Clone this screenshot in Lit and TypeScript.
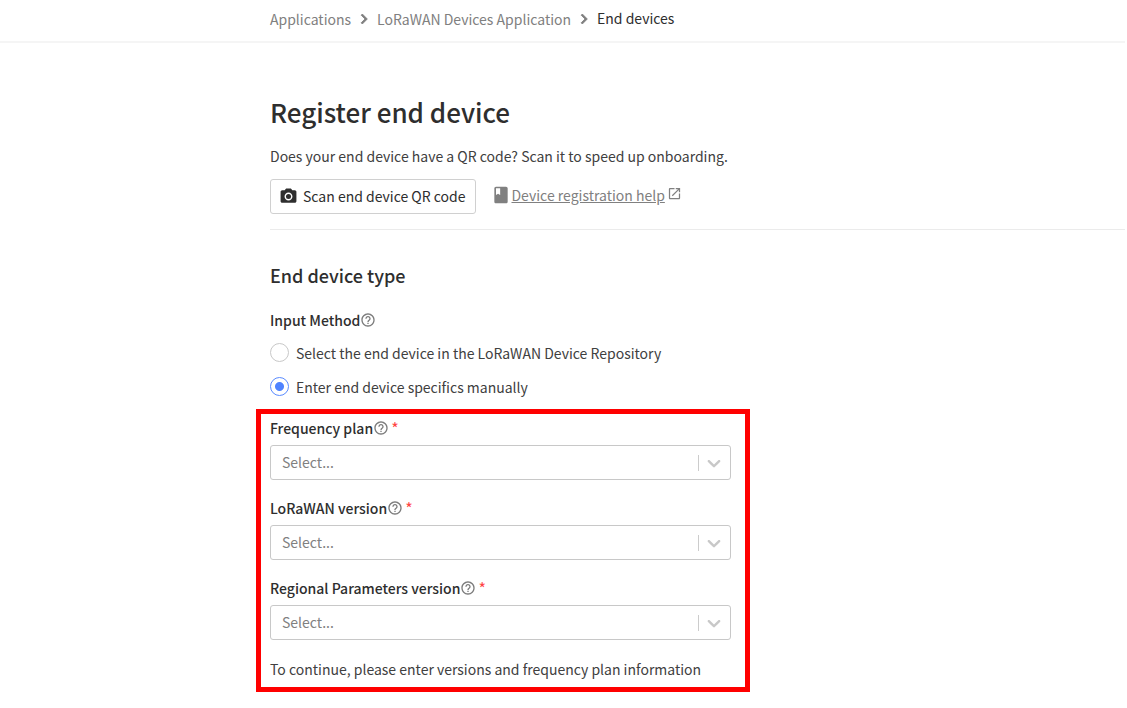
import { LitElement, html, css, svg } from "lit";
import { customElement, property, state } from "lit/decorators.js";

const helpIcon = svg`<path fill="currentColor" d="M11 18h2v-2h-2v2zm1-16C6.48 2 2 6.48 2 12s4.48 10 10 10 10-4.48 10-10S17.52 2 12 2zm0 18c-4.41 0-8-3.59-8-8s3.59-8 8-8 8 3.59 8 8-3.59 8-8 8zm0-14c-2.21 0-4 1.79-4 4h2c0-1.1.9-2 2-2s2 .9 2 2c0 2-3 1.75-3 5h2c0-2.25 3-2.5 3-5 0-2.21-1.79-4-4-4z"/>`;

@customElement("help-hint")
class HelpHint extends LitElement {
  static styles = css`
    :host {
      display: inline-flex;
      color: #7c7c7c;
    }
    .icon {
      width: 16px;
      height: 16px;
    }
  `;
  render() {
    return html`<svg class="icon" viewBox="0 0 24 24" aria-hidden="true">${helpIcon}</svg>`;
  }
}

@customElement("select-field")
class SelectField extends LitElement {
  @property() label = "";
  @property({ attribute: false }) options: string[] = [];

  static styles = css`
    :host {
      display: block;
    }
    .label {
      display: flex;
      align-items: center;
      height: 20px;
      margin-bottom: 7px;
      font-weight: 500;
      color: #2e2e2e;
    }
    .required {
      margin-left: 2px;
      color: #f44;
      font-size: 16px;
      font-weight: 400;
    }
    .control {
      display: grid;
      grid-template-columns: 1fr 33px;
      align-items: center;
    }
    .select {
      grid-area: 1 / 1 / 2 / 3;
      width: 100%;
      height: 35px;
      box-sizing: border-box;
      padding: 0 44px 2px 11px;
      border: 1px solid #c8c8c8;
      border-radius: 3px;
      background: #fff;
      color: #808080;
      font: inherit;
      appearance: none;
    }
    .indicator {
      grid-area: 1 / 2;
      display: flex;
      align-items: center;
      justify-content: center;
      box-sizing: border-box;
      height: 16px;
      padding-right: 2px;
      border-left: 1px solid #ccc;
      color: #c8c8c8;
      pointer-events: none;
    }
    .chevron {
      width: 22px;
      height: 22px;
    }
  `;
  render() {
    return html`
      <label class="label" for="field">
        ${this.label}<help-hint></help-hint><span class="required">*</span>
      </label>
      <div class="control">
        <select class="select" id="field" required>
          <option value="">Select...</option>
          ${this.options.map((o) => html`<option>${o}</option>`)}
        </select>
        <span class="indicator">
          <svg class="chevron" viewBox="0 0 20 20" aria-hidden="true">
            <path fill="currentColor" d="M4.516 7.548c0.436-0.446 1.043-0.481 1.576 0l3.908 3.747 3.908-3.747c0.533-0.481 1.141-0.446 1.574 0 0.436 0.445 0.408 1.197 0 1.615-0.406 0.418-4.695 4.502-4.695 4.502-0.217 0.223-0.502 0.335-0.787 0.335s-0.57-0.112-0.789-0.335c0 0-4.287-4.084-4.695-4.502s-0.436-1.17 0-1.615z"/>
          </svg>
        </span>
      </div>
    `;
  }
}

@customElement("app-root")
class AppRoot extends LitElement {
  @state() private method = "manual";

  static styles = css`
    :host {
      display: block;
      font: 400 14px/20px "Noto Sans CJK SC", "Open Sans", sans-serif;
      color: #404040;
      background: #fff;
    }
    .bar {
      padding: 8px 0 12px 270px;
      margin-right: 2px;
      border-bottom: 2px solid #f5f5f5;
    }
    .crumbs {
      display: flex;
      align-items: center;
      height: 21px;
    }
    .crumb {
      color: #808080;
      text-decoration: none;
    }
    .sep {
      width: 20px;
      height: 20px;
      margin: 0 3px;
      color: #808080;
    }
    .current {
      padding-bottom: 2px;
      color: #2e2e2e;
    }
    .page {
      padding: 51px 2px 16px 270px;
    }
    .title {
      margin: 0;
      font-size: 26px;
      line-height: 36px;
      font-weight: 500;
      color: #2e2e2e;
    }
    .intro {
      margin: 16px 0 13px;
    }
    .actions {
      display: flex;
      align-items: center;
      gap: 15px;
      padding-bottom: 15px;
      border-bottom: 1px solid #ebebeb;
    }
    .scan {
      display: flex;
      align-items: center;
      gap: 5px;
      height: 35px;
      padding: 0 10px 1px 8px;
      border: 1px solid #d0d0d0;
      border-radius: 3px;
      background: #fff;
      color: #2e2e2e;
      font: inherit;
    }
    .camera {
      width: 19px;
      height: 19px;
    }
    .help {
      display: flex;
      align-items: center;
      padding-bottom: 3px;
      color: #808080;
      text-decoration: none;
    }
    .help-text {
      text-decoration: underline;
    }
    .book {
      width: 20px;
      height: 20px;
    }
    .external {
      width: 15px;
      height: 15px;
      margin: 0 0 4px 2px;
    }
    .subtitle {
      margin: 33px 0 23px;
      font-size: 18px;
      line-height: 24px;
      font-weight: 500;
      color: #2e2e2e;
    }
    .methods {
      margin: 0;
      padding: 0;
      border: 0;
    }
    .legend {
      display: flex;
      align-items: center;
      height: 20px;
      padding: 0;
      margin-bottom: 12px;
      font-weight: 500;
      color: #2e2e2e;
    }
    .choice {
      display: flex;
      align-items: center;
      gap: 7px;
      height: 20px;
      margin-bottom: 14px;
    }
    .choice-text {
      padding-top: 2px;
    }
    .radio {
      appearance: none;
      width: 19px;
      height: 19px;
      margin: 0;
      border: 1px solid #c8c8c8;
      border-radius: 50%;
      background: #fff;
    }
    .radio:checked {
      border-color: #5a8bff;
      background: radial-gradient(circle, #4f83ff 4px, #fff 5px);
    }
    .highlight {
      max-width: 461px;
      margin: -1px 0 0 -14px;
      padding: 4px 14px 8px 9px;
      border: 5px solid #f00;
    }
    .fields {
      display: grid;
      gap: 18px;
    }
    .note {
      margin: 19px 0 0;
    }
  `;

  private choice(value: string, text: string) {
    return html`<label class="choice">
      <input class="radio" type="radio" name="method" value=${value}
        .checked=${this.method === value} @change=${() => (this.method = value)} />
      <span class="choice-text">${text}</span>
    </label>`;
  }

  private separator() {
    return html`<svg class="sep" viewBox="0 0 24 24" aria-hidden="true">
      <path fill="currentColor" d="M8.59 16.59 13.17 12 8.59 7.41 10 6l6 6-6 6z" stroke="currentColor" />
    </svg>`;
  }

  render() {
    return html`
      <header class="bar">
        <nav class="crumbs" aria-label="Breadcrumb">
          <a class="crumb" href="#applications">Applications</a>
          ${this.separator()}
          <a class="crumb" href="#application">LoRaWAN Devices Application</a>
          ${this.separator()}
          <span class="current">End devices</span>
        </nav>
      </header>
      <main class="page">
        <h1 class="title">Register end device</h1>
        <p class="intro">Does your end device have a QR code? Scan it to speed up onboarding.</p>
        <div class="actions">
          <button class="scan" type="button">
            <svg class="camera" viewBox="0 0 24 24" aria-hidden="true">
              <circle cx="12" cy="12" r="3.2" fill="currentColor" />
              <path fill="currentColor" d="M9 2 7.17 4H4c-1.1 0-2 .9-2 2v12c0 1.1.9 2 2 2h16c1.1 0 2-.9 2-2V6c0-1.1-.9-2-2-2h-3.17L15 2H9zm3 15c-2.76 0-5-2.24-5-5s2.24-5 5-5 5 2.24 5 5-2.24 5-5 5z" />
            </svg>
            Scan end device QR code
          </button>
          <a class="help" href="#help">
            <svg class="book" viewBox="0 0 24 24" aria-hidden="true">
              <path fill="currentColor" d="M18 2H6c-1.1 0-2 .9-2 2v16c0 1.1.9 2 2 2h12c1.1 0 2-.9 2-2V4c0-1.1-.9-2-2-2zM6 4h5v8l-2.500-1.500L6 12V4z" />
            </svg>
            <span class="help-text">Device registration help</span>
            <svg class="external" viewBox="0 0 24 24" aria-hidden="true">
              <path fill="currentColor" d="M19 19H5V5h7V3H5c-1.110 0-2 .9-2 2v14c0 1.100.890 2 2 2h14c1.100 0 2-.9 2-2v-7h-2v7zM14 3v2h3.590l-9.830 9.830 1.410 1.410L19 6.410V10h2V3h-7z" />
            </svg>
          </a>
        </div>
        <h2 class="subtitle">End device type</h2>
        <fieldset class="methods">
          <legend class="legend">Input Method<help-hint></help-hint></legend>
          ${this.choice("repository", "Select the end device in the LoRaWAN Device Repository")}
          ${this.choice("manual", "Enter end device specifics manually")}
        </fieldset>
        <section class="highlight">
          <div class="fields">
            <select-field label="Frequency plan"></select-field>
            <select-field label="LoRaWAN version"></select-field>
            <select-field label="Regional Parameters version"></select-field>
          </div>
          <p class="note">To continue, please enter versions and frequency plan information</p>
        </section>
      </main>
    `;
  }
}
